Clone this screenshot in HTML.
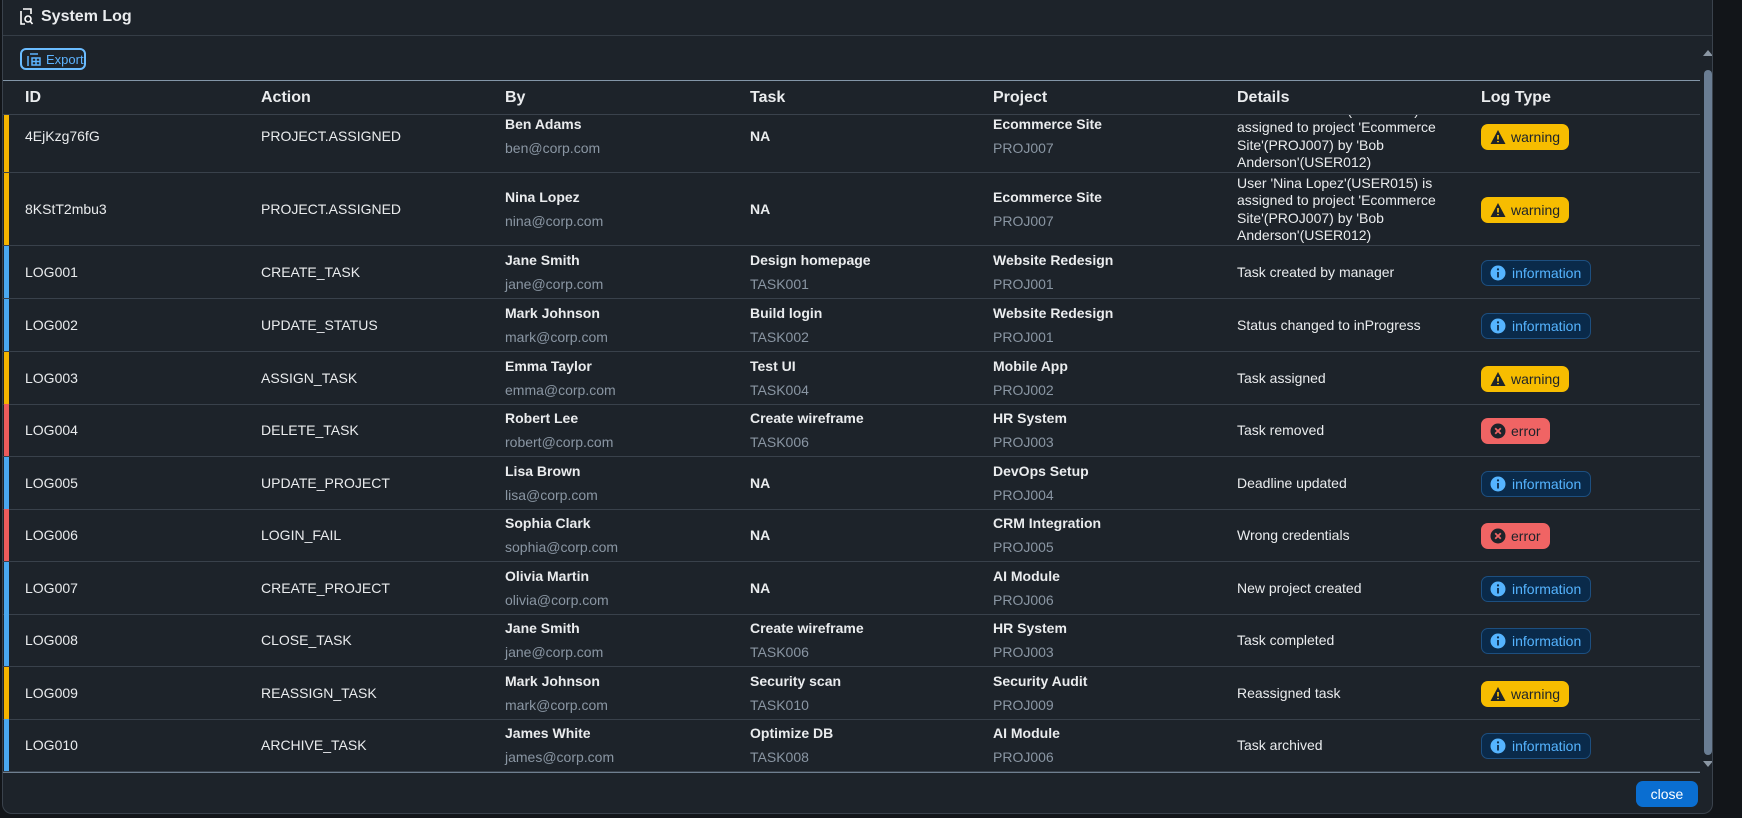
<!DOCTYPE html>
<html><head><meta charset="utf-8"><style>
*{box-sizing:border-box;margin:0;padding:0}
body{width:1742px;height:818px;background:#121519;font-family:"Liberation Sans",sans-serif;font-size:14px;color:#eaecee;position:relative;overflow:hidden}
.dlg{position:absolute;left:2px;top:0;width:1711px;height:814px;background:#1d232a;border:1px solid #3a424c;border-top:none;border-radius:0 0 10px 10px;overflow:hidden}
.title{position:absolute;left:0;top:0;width:100%;height:36px;border-bottom:1px solid #353d46;font-weight:bold;font-size:16px;padding:8px 0 0 38px}
.export{position:absolute;left:17px;top:48px;width:66px;height:22px;border:2px solid #6bbcff;border-radius:6px;color:#5cb3ff;font-size:13px;padding:2px 0 0 24px;white-space:nowrap}
.hdr{position:absolute;left:0;top:80px;width:1697px;height:35px;background:#1d232a;border-top:1px solid #8396a8;border-bottom:1px solid #3a424c;z-index:2;font-weight:bold;font-size:16px}
.hdr span{position:absolute;top:8px}
.body{position:absolute;left:0;top:115px;width:1697px;height:657px;overflow:hidden}
.row{position:absolute;left:0;width:1697px;border-bottom:1px solid #39414b}
.bar{position:absolute;left:1px;top:0;bottom:0;width:5px}
.c{position:absolute;white-space:nowrap}
.b{font-weight:bold}
.g{color:#8a96a3}
.badge{position:absolute;left:1478px;height:26px;border-radius:7px;font-size:14px;padding:5px 9px 0 30px;white-space:nowrap}
.w{background:#f7bd00;color:#1d232a}
.e{background:#f06464;color:#1d232a}
.i{background:#0a2a4a;border:1px solid #1d4f80;color:#55b4ff;padding-top:4px}
.ic{position:absolute;left:9px;top:5px;width:16px;height:16px}
.foot{position:absolute;left:0;top:772px;width:1697px;border-top:1px solid #6f7f90}
.close{position:absolute;left:1633px;top:781px;width:62px;height:26px;background:#0a6ed1;border-radius:7px;color:#fff;font-size:14px;text-align:center;padding-top:5px}
.sb{position:absolute;left:1698px;top:36px;width:14px;height:736px}
.thumb{position:absolute;left:3px;top:34px;width:8px;height:685px;background:#6a7d93;border-radius:4px}
</style></head><body>
<div class="dlg">
<div class="title"><svg style="position:absolute;left:15px;top:8px" width="16" height="18" viewBox="0 0 16 18" fill="none" stroke="#fff" stroke-width="1.6"><path d="M5 1H13V6M3 3V16H7"/><circle cx="10" cy="11" r="3"/><path d="M12 13L14.5 16"/></svg>System Log</div>
<div class="export"><svg style="position:absolute;left:4px;top:3px" width="16" height="14" viewBox="0 0 16 14" fill="none" stroke="#5cb3ff" stroke-width="1.5"><path d="M4 1H12M2 3V13"/><rect x="6" y="5" width="8" height="7"/><path d="M10 5V12M6 8.5H14"/></svg>Export</div>
<div class="hdr"><span style="left:22px">ID</span><span style="left:258px">Action</span><span style="left:502px">By</span><span style="left:747px">Task</span><span style="left:990px">Project</span><span style="left:1234px">Details</span><span style="left:1478px">Log Type</span></div>
<div class="body" id="b"></div>
<div class="foot"></div>
<div class="close">close</div>
<div class="sb"><div style="position:absolute;left:2px;top:14px;border:5px solid transparent;border-bottom:6px solid #8a96a3;border-top:none"></div><div class="thumb"></div><div style="position:absolute;left:2px;top:725px;border:5px solid transparent;border-top:6px solid #8a96a3;border-bottom:none"></div></div>
</div>
<script>
var W='<svg class="ic" viewBox="0 0 16 16"><path d="M8 1L15.5 15H0.5Z" fill="#1d232a"/><path d="M8 6V10.5M8 12V13.3" stroke="#f7bd00" stroke-width="1.8"/></svg>';
var E='<svg class="ic" viewBox="0 0 16 16"><circle cx="8" cy="8" r="7.5" fill="#1d232a"/><path d="M5.2 5.2L10.8 10.8M10.8 5.2L5.2 10.8" stroke="#f06464" stroke-width="1.8"/></svg>';
var I='<svg class="ic" viewBox="0 0 16 16" style="top:4px;left:8px"><circle cx="8" cy="8" r="7.5" fill="#55b4ff"/><path d="M8 7V12.5" stroke="#0a2a4a" stroke-width="1.8"/><circle cx="8" cy="4.4" r="1.1" fill="#0a2a4a"/></svg>';
var rows=[
["w","4EjKzg76fG","PROJECT.ASSIGNED","Ben Adams","ben@corp.com","NA","","Ecommerce Site","PROJ007","User 'Ben Adams'(USER014) is<br>assigned to project 'Ecommerce<br>Site'(PROJ007) by 'Bob<br>Anderson'(USER012)"],
["w","8KStT2mbu3","PROJECT.ASSIGNED","Nina Lopez","nina@corp.com","NA","","Ecommerce Site","PROJ007","User 'Nina Lopez'(USER015) is<br>assigned to project 'Ecommerce<br>Site'(PROJ007) by 'Bob<br>Anderson'(USER012)"],
["i","LOG001","CREATE_TASK","Jane Smith","jane@corp.com","Design homepage","TASK001","Website Redesign","PROJ001","Task created by manager"],
["i","LOG002","UPDATE_STATUS","Mark Johnson","mark@corp.com","Build login","TASK002","Website Redesign","PROJ001","Status changed to inProgress"],
["w","LOG003","ASSIGN_TASK","Emma Taylor","emma@corp.com","Test UI","TASK004","Mobile App","PROJ002","Task assigned"],
["e","LOG004","DELETE_TASK","Robert Lee","robert@corp.com","Create wireframe","TASK006","HR System","PROJ003","Task removed"],
["i","LOG005","UPDATE_PROJECT","Lisa Brown","lisa@corp.com","NA","","DevOps Setup","PROJ004","Deadline updated"],
["e","LOG006","LOGIN_FAIL","Sophia Clark","sophia@corp.com","NA","","CRM Integration","PROJ005","Wrong credentials"],
["i","LOG007","CREATE_PROJECT","Olivia Martin","olivia@corp.com","NA","","AI Module","PROJ006","New project created"],
["i","LOG008","CLOSE_TASK","Jane Smith","jane@corp.com","Create wireframe","TASK006","HR System","PROJ003","Task completed"],
["w","LOG009","REASSIGN_TASK","Mark Johnson","mark@corp.com","Security scan","TASK010","Security Audit","PROJ009","Reassigned task"],
["i","LOG010","ARCHIVE_TASK","James White","james@corp.com","Optimize DB","TASK008","AI Module","PROJ006","Task archived"]];
var tops=[-15,58,131,184,237,289,342,394,447,499,552,604],h=[73,73,53,53,53,53,53,53,53,53,53,53];
var col={w:"#f4b400",i:"#4aa8f0",e:"#ec5b5b"},lbl={w:"warning",i:"information",e:"error"},ic={w:W,i:I,e:E};
var s="";
rows.forEach(function(r,k){var H=h[k],m=H/2,t=r[0];
s+='<div class="row" style="top:'+tops[k]+'px;height:'+H+'px"><div class="bar" style="background:'+col[t]+'"></div>';
s+='<div class="c" style="left:22px;top:'+(m-9)+'px">'+r[1]+'</div><div class="c" style="left:258px;top:'+(m-9)+'px">'+r[2]+'</div>';
s+='<div class="c b" style="left:502px;top:'+(m-21)+'px">'+r[3]+'</div><div class="c g" style="left:502px;top:'+(m+3)+'px">'+r[4]+'</div>';
if(r[6])s+='<div class="c b" style="left:747px;top:'+(m-21)+'px">'+r[5]+'</div><div class="c g" style="left:747px;top:'+(m+3)+'px">'+r[6]+'</div>';
else s+='<div class="c b" style="left:747px;top:'+(m-9)+'px">'+r[5]+'</div>';
s+='<div class="c b" style="left:990px;top:'+(m-21)+'px">'+r[7]+'</div><div class="c g" style="left:990px;top:'+(m+3)+'px">'+r[8]+'</div>';
var nl=(r[9].match(/<br>/g)||[]).length+1;
s+='<div class="c" style="left:1234px;line-height:17.5px;top:'+(m-nl*8.75)+'px">'+r[9]+'</div>';
s+='<div class="badge '+t+'" style="top:'+(m-13)+'px">'+ic[t]+lbl[t]+'</div></div>';});
document.getElementById('b').innerHTML=s;
</script>
</body></html>
